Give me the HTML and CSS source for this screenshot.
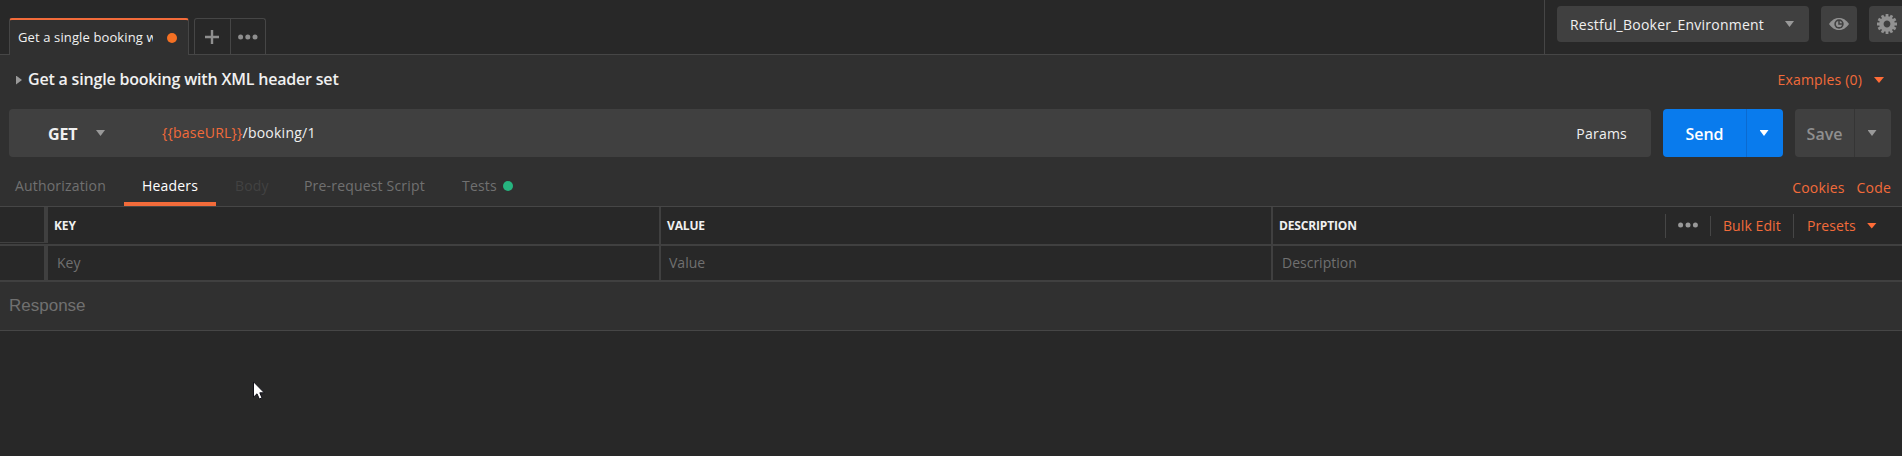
FILE: index.html
```
<!DOCTYPE html>
<html lang="en">
<head>
<meta charset="utf-8">
<title>Request builder</title>
<link rel="stylesheet" href="styles.css">
</head>
<body>
<header class="topbar">
  <div class="tab"><span class="tab-name">Get a single booking w</span><span class="unsaved"></span></div>
  <div class="tab-tools">
    <div class="tool"><svg width="16" height="16" viewBox="0 0 16 16"><path d="M8 1v14M1 8h14" stroke="#8f8f8f" stroke-width="2.4"/></svg></div>
    <div class="tool"><svg class="dots" width="20" height="6" viewBox="0 0 20 6"><g fill="#8f8f8f"><circle cx="2.6" cy="3" r="2.5"/><circle cx="9.800" cy="3" r="2.5"/><circle cx="17" cy="3" r="2.5"/></g></svg></div>
  </div>
  <div class="environment">
    <div class="env-select"><span>Restful_Booker_Environment</span><i class="caret"></i></div>
    <div class="icon-button"><svg width="20" height="14" viewBox="0 0 20 14"><path fill="#919191" d="M0 7C3 2.6 6.4 1 10 1s7 1.600 10 6c-3 4.400-6.400 6-10 6S3 11.400 0 7z"/><circle cx="10" cy="7" r="4.700" fill="#404040"/><circle cx="10" cy="7" r="3.100" fill="#919191"/><path d="M10 3.500V7H13.500" fill="none" stroke="#404040" stroke-width="1.500"/></svg></div>
    <div class="icon-button"><svg width="20" height="20" viewBox="-10 -10 20 20"><circle r="5.600" fill="none" stroke="#919191" stroke-width="4.400"/><g stroke="#919191" stroke-width="2.800"><path id="t" d="M0-10V-6M0 6V10"/><use href="#t" transform="rotate(30)"/><use href="#t" transform="rotate(60)"/><use href="#t" transform="rotate(90)"/><use href="#t" transform="rotate(120)"/><use href="#t" transform="rotate(150)"/></g></svg></div>
  </div>
</header>
<main>
  <section class="request">
    <div class="title-row">
      <i class="disclosure"></i><h1>Get a single booking with XML header set</h1>
      <div class="examples">Examples (0)<i class="caret orange"></i></div>
    </div>
    <div class="url-row">
      <div class="url-box"><strong class="method">GET</strong><i class="caret"></i><span class="url"><span class="variable">{{baseURL}}</span>/booking/1</span><span class="params">Params</span></div>
      <div class="split send"><span class="main-action">Send</span><span class="more"><i class="caret"></i></span></div>
      <div class="split save"><span class="main-action">Save</span><span class="more"><i class="caret"></i></span></div>
    </div>
    <nav class="sections">
      <span class="section auth">Authorization</span><span class="section active">Headers</span><span class="section disabled">Body</span><span class="section script">Pre-request Script</span><span class="section tests">Tests<i class="status"></i></span>
      <div class="links"><span class="cookies">Cookies</span><span class="code">Code</span></div>
    </nav>
  </section>
  <section class="table">
    <div class="row head">
      <div class="cell check"></div><div class="cell key"><span>KEY</span></div><div class="cell value"><span>VALUE</span></div>
      <div class="cell desc"><span>DESCRIPTION</span>
        <div class="actions"><div class="act more-act"><svg width="20" height="6" viewBox="0 0 20 6"><g fill="#999"><circle cx="2.600" cy="3" r="2.500"/><circle cx="10" cy="3" r="2.500"/><circle cx="17.400" cy="3" r="2.500"/></g></svg></div><div class="act bulk"><span>Bulk Edit</span></div><div class="act presets"><span>Presets</span><i class="caret orange"></i></div></div>
      </div>
    </div>
    <div class="row entry">
      <div class="cell check"></div><div class="cell key"><span>Key</span></div><div class="cell value"><span>Value</span></div><div class="cell desc"><span>Description</span></div>
    </div>
  </section>
  <section class="response">Response</section>
</main>
<svg class="pointer" width="12" height="19" viewBox="0 0 12 19"><path d="M.5.8V16.200L4 12.800L6.300 18L9 16.900L6.800 11.800H11.300z" fill="#fff" stroke="#101018"/></svg>
</body>
</html>
```
FILE: styles.css
```
* { box-sizing: border-box; }
body { margin: 0; width: 1902px; height: 456px; overflow: hidden; background: #282828; color: #f0f0f0; font: 14px/20px "Open Sans", "Noto Sans", sans-serif; }
svg { display: block; }
.topbar { display: flex; height: 55px; padding-left: 9px; align-items: flex-end; border-bottom: 1px solid #464646; }
.tab { display: flex; align-items: center; width: 180px; height: 37px; margin-bottom: -1px; padding: 0 11px 0 8px; border: solid #464646; border-width: 0 1px; border-top: 2px solid #f26b3a; border-radius: 3px 3px 0 0; background: #303030; }
.tab-name { width: 135px; overflow: hidden; padding-bottom: 1px; white-space: nowrap; font-size: 13px; font-weight: 500; letter-spacing: .12px; }
.unsaved { width: 10px; height: 10px; margin-left: 14px; border-radius: 50%; background: #f47023; }
.tab-tools { display: flex; width: 72px; height: 36px; margin-left: 5px; border: 1px solid #464646; border-bottom: 0; border-radius: 3px 3px 0 0; }
.tool { display: flex; flex: 1; align-items: center; justify-content: center; }
.tool + .tool { border-left: 1px solid #464646; }
.environment { display: flex; gap: 12px; width: 358px; height: 54px; margin-left: auto; padding: 6px 0 0 12px; border-left: 1px solid #464646; }
.env-select { display: flex; flex: none; align-items: center; justify-content: space-between; width: 252px; height: 36px; padding: 0 15px 0 13px; border-radius: 4px; background: #404040; font-weight: 500; letter-spacing: .23px; }
.env-select span { padding-top: 1px; }
.icon-button { display: flex; flex: none; align-items: center; justify-content: center; width: 36px; height: 36px; border-radius: 4px; background: #404040; }
.caret { flex: none; width: 9px; height: 6px; background: #999; clip-path: polygon(0 0, 100% 0, 50% 100%); }
.orange { width: 10px; background: #ff6c37; }
.request { height: 152px; background: #303030; border-bottom: 1px solid #464646; }
.title-row { display: flex; align-items: center; height: 54px; padding: 0 18px 4px 16px; }
.disclosure { width: 6px; height: 9px; background: #999; clip-path: polygon(0 0, 100% 50%, 0 100%); }
h1 { margin: 0 0 0 6px; padding-bottom: 2px; font-size: 16px; font-weight: 600; letter-spacing: -.19px; }
.examples { display: flex; align-items: center; gap: 12px; margin-left: auto; color: #f26b3a; letter-spacing: .17px; }
.url-row { display: flex; gap: 12px; height: 48px; padding-left: 9px; }
.url-box { display: flex; align-items: center; width: 1642px; padding: 0 24px 0 39px; border-radius: 4px; background: #404040; letter-spacing: .23px; }
.method { width: 48px; padding-top: 2px; font-size: 16px; font-weight: 700; letter-spacing: -.2px; }
.url { margin-left: 57px; font-weight: 500; }
.variable { color: #f26b3a; font-weight: 400; }
.params { margin-left: auto; padding-top: 2px; font-weight: 500; }
.split { display: flex; overflow: hidden; border-radius: 4px; font-size: 16px; font-weight: 600; }
.main-action, .more { display: flex; align-items: center; justify-content: center; }
.main-action { padding-top: 2px; }
.more { flex: 1; padding-right: 2px; border-left: 1px solid #353535; }
.send { width: 120px; background: #097bed; color: #fff; }
.send .main-action { width: 83px; }
.send .more { border-color: #0b6ad0; }
.send .caret { background: #fff; }
.save { width: 96px; background: #404040; color: #8f8f8f; }
.save .main-action { width: 59px; }
.sections { display: flex; height: 49px; padding: 0 11px 0 0; letter-spacing: .18px; }
.section { display: flex; align-items: center; height: 49px; padding: 9px 18px 0; color: #707070; }
.auth { width: 124px; padding-left: 15px; }
.active { width: 92px; padding-top: 13px; border-bottom: 4px solid #f26b3a; color: #fff; font-weight: 500; }
.disabled { width: 70px; padding-left: 19px; color: #424242; }
.script { width: 158px; }
.status { width: 10px; height: 10px; margin-left: 6px; border-radius: 50%; background: #26b47f; }
.links { display: flex; align-items: center; gap: 12px; height: 49px; padding-top: 12px; margin-left: auto; color: #f26b3a; }
.row { display: flex; border-bottom: 2px solid #404040; }
.head { height: 39px; font-size: 12px; font-weight: 700; letter-spacing: -.15px; }
.entry { height: 36px; color: #707070; }
.cell { display: flex; align-items: center; }
.check { width: 48px; }
.check::after { width: 4px; height: 100%; margin-left: auto; background: #404040; content: ""; }
.head .check { height: 36px; border-bottom: 1px solid #404040; }
.key { width: 611px; padding-left: 6px; }
.value { width: 612px; padding-left: 6px; border-left: 2px solid #404040; }
.desc { width: 631px; padding-left: 6px; border-left: 2px solid #404040; }
.entry .key { padding-left: 9px; }
.entry .value { padding-left: 8px; }
.entry .desc { padding-left: 9px; }
.actions { display: flex; align-items: center; margin-left: auto; color: #f26b3a; font-size: 14px; font-weight: 400; letter-spacing: .08px; }
.act { display: flex; align-items: center; height: 24px; border-left: 1px solid #464646; }
.more-act { width: 45px; padding: 0 0 2px 12px; }
.bulk { width: 83px; height: 20px; padding-left: 12px; }
.presets { width: 109px; padding-left: 13px; gap: 11px; }
.response { height: 49px; padding: 14px 9px; border-bottom: 1px solid #464646; background: #303030; color: #707070; font: 17px/20px "Liberation Sans", sans-serif; }
.pointer { position: absolute; left: 253px; top: 381px; }
```
